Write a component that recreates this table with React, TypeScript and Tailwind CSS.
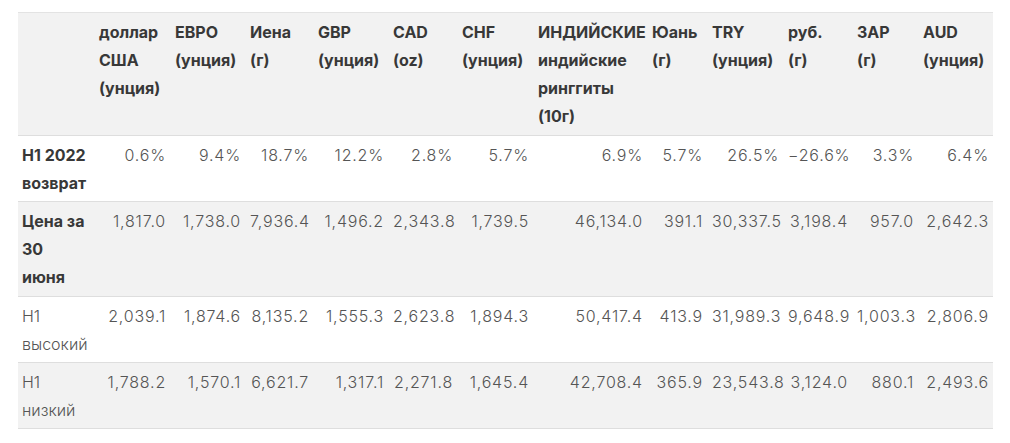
import React from 'react';

interface Col {
  title: string[];
  width: string;
}

const columns: Col[] = [
  { title: ['доллар', 'США', '(унция)'], width: 'w-[76px]' },
  { title: ['ЕВРО', '(унция)'], width: 'w-[75px]' },
  { title: ['Иена', '(г)'], width: 'w-[68px]' },
  { title: ['GBP', '(унция)'], width: 'w-[75px]' },
  { title: ['CAD', '(oz)'], width: 'w-[69px]' },
  { title: ['CHF', '(унция)'], width: 'w-[76px]' },
  { title: ['ИНДИЙСКИЕ', 'индийские', 'ринггиты', '(10г)'], width: 'w-[114px]' },
  { title: ['Юань', '(г)'], width: 'w-[60px]' },
  { title: ['TRY', '(унция)'], width: 'w-[76px]' },
  { title: ['руб.', '(г)'], width: 'w-[69px]' },
  { title: ['ЗАР', '(г)'], width: 'w-[66px]' },
  { title: ['AUD', '(унция)'], width: 'w-[75px]' },
];

const rows = [
  {
    label: ['H1 2022', 'возврат'],
    bold: true,
    bg: 'bg-white',
    pad: 'pb-[4px]',
    values: ['0.6%', '9.4%', '18.7%', '12.2%', '2.8%', '5.7%', '6.9%', '5.7%', '26.5%', '−26.6%', '3.3%', '6.4%'],
  },
  {
    label: ['Цена за', '30', 'июня'],
    bold: true,
    bg: 'bg-[#f2f2f2]',
    pad: 'pb-[5px]',
    values: ['1,817.0', '1,738.0', '7,936.4', '1,496.2', '2,343.8', '1,739.5', '46,134.0', '391.1', '30,337.5', '3,198.4', '957.0', '2,642.3'],
  },
  {
    label: ['H1', 'высокий'],
    bold: false,
    bg: 'bg-white',
    pad: 'pb-[4px]',
    values: ['2,039.1', '1,874.6', '8,135.2', '1,555.3', '2,623.8', '1,894.3', '50,417.4', '413.9', '31,989.3', '9,648.9', '1,003.3', '2,806.9'],
  },
  {
    label: ['H1', 'низкий'],
    bold: false,
    bg: 'bg-[#f2f2f2]',
    pad: 'pb-[4px]',
    values: ['1,788.2', '1,570.1', '6,621.7', '1,317.1', '2,271.8', '1,645.4', '42,708.4', '365.9', '23,543.8', '3,124.0', '880.1', '2,493.6'],
  },
];

export default function App() {
  return (
    <div className="w-[1010px] h-[443px] bg-white pt-[12px] pl-[18px]">
      <table className="table-fixed w-[975px] border-collapse text-[16px] leading-[28px] font-['Inter','Liberation_Sans',sans-serif]">
        <colgroup>
          <col className="w-[76px]" />
          {columns.map((c, i) => (
            <col key={i} className={c.width} />
          ))}
        </colgroup>
        <thead>
          <tr className="bg-[#f2f2f2] border-t border-[#e3e3e3] border-b border-b-[#dedede]">
            <th className="px-[5px] pt-[5px] pb-[5px]" />
            {columns.map((c, i) => (
              <th key={i} className="text-left align-top px-[5px] pt-[5px] pb-[5px] font-bold text-[#383838] whitespace-nowrap">
                {c.title.map((t, j) => (
                  <div key={j}>{t}</div>
                ))}
              </th>
            ))}
          </tr>
        </thead>
        <tbody>
          {rows.map((r, i) => (
            <tr key={i} className={`${r.bg} border-b border-[#dedede]`}>
              <td
                className={`align-top pl-[4px] pr-[5px] pt-[5px] ${r.pad} ${
                  r.bold ? 'font-bold text-[#383838]' : 'font-light text-[#555]'
                }`}
              >
                {r.label.map((t, j) => (
                  <div key={j}>{t}</div>
                ))}
              </td>
              {r.values.map((v, j) => (
                <td
                  key={j}
                  className={`align-top text-right pl-[5px] pr-[4px] pt-[5px] ${r.pad} font-light text-[#555] tracking-[0.05em] whitespace-nowrap`}
                >
                  {v}
                </td>
              ))}
            </tr>
          ))}
        </tbody>
      </table>
    </div>
  );
}
